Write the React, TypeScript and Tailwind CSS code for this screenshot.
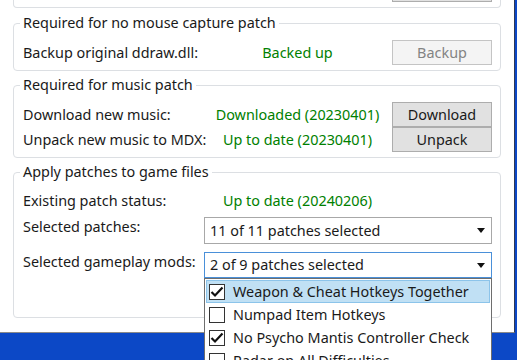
import { ReactNode } from 'react';

const font = { fontFamily: '"Noto Sans", "Open Sans", Arial, sans-serif' };

function Arrow() {
    return (
        <svg width="8" height="5" viewBox="0 0 8 5" className="shrink-0">
            <path d="M0 0 H8 L4 5 Z" fill="#111" />
        </svg>
    );
}

function Check({ on }: { on: boolean }) {
    return (
        <div className="w-[16px] h-[16px] border border-[#333] bg-white flex items-center justify-center shrink-0">
            {on && (
                <svg width="14" height="14" viewBox="0 0 14 14">
                    <path d="M1.5 7 L5 10.5 L12.5 2.5" fill="none" stroke="#111" strokeWidth="2.2" />
                </svg>
            )}
        </div>
    );
}

function Group({ title, children }: { title: string; children: ReactNode }) {
    return (
        <fieldset className="mx-[13px] rounded-[4px] border border-[#dcdfe3]">
            <legend className="ml-[6px] px-[3px] leading-[20px]">{title}</legend>
            {children}
        </fieldset>
    );
}

const btn = 'w-[100px] h-[25px] flex items-center justify-center border shrink-0';
const label = 'w-[181px] shrink-0 whitespace-nowrap';
const value = 'w-[187px] shrink-0 whitespace-nowrap text-center text-[#008000]';

export default function App() {
    const items = [
        { label: 'Weapon & Cheat Hotkeys Together', on: true, active: true },
        { label: 'Numpad Item Hotkeys', on: false },
        { label: 'No Psycho Mantis Controller Check', on: true },
        { label: 'Radar on All Difficulties', on: false },
    ];

    return (
        <div className="relative w-[517px] h-[360px] overflow-hidden bg-[#0c48c6] text-[14.4px] text-[#1a1a1a]" style={font}>
            <div className="w-[515px] h-[333px] bg-white border-r border-b border-r-[#2d3756] border-b-[#8a8a8a] flex flex-col">
                {/* tail of the group above */}
                <div className="mx-[13px] h-[8px] border-x border-b border-[#dcdfe3] rounded-b-[4px] flex justify-end pr-[8px]">
                    <div className="w-[100px] h-[2px] border-x border-b border-[#adadad] bg-[#e1e1e1]" />
                </div>

                <div className="mt-[5px] flex flex-col gap-[4px]">
                    <Group title="Required for no mouse capture patch">
                        <div className="pt-[7px] pb-[5px] pl-[9px] pr-[8px] flex items-center h-[37px]">
                            <span className={label}>Backup original ddraw.dll:</span>
                            <span className={value}>Backed up</span>
                            <div className={`${btn} ml-auto bg-[#f4f4f4] border-[#c4c4c4] text-[#838383]`}>Backup</div>
                        </div>
                    </Group>

                    <Group title="Required for music patch">
                        <div className="pt-[7px] pb-[5px] pl-[9px] pr-[8px] flex flex-col">
                            <div className="flex items-center h-[25px]">
                                <span className={label}>Download new music:</span>
                                <span className={value}>Downloaded (20230401)</span>
                                <div className={`${btn} ml-auto bg-[#e1e1e1] border-[#adadad]`}>Download</div>
                            </div>
                            <div className="flex items-center h-[25px]">
                                <span className={label}>Unpack new music to MDX:</span>
                                <span className={value}>Up to date (20230401)</span>
                                <div className={`${btn} ml-auto bg-[#e1e1e1] border-[#adadad]`}>Unpack</div>
                            </div>
                        </div>
                    </Group>

                    <Group title="Apply patches to game files">
                        <div className="pl-[9px] pr-[8px] pb-[39px] flex flex-col">
                            <div className="mt-[9px] h-[20px] flex items-center">
                                <span className={label}>Existing patch status:</span>
                                <span className={value}>Up to date (20240206)</span>
                            </div>
                            <div className="mt-[6px] flex">
                                <span className={`${label} leading-[20px]`}>Selected patches:</span>
                                <div className="w-[288px] h-[27px] border border-[#a8a8a8] flex items-center justify-between pl-[5px] pr-[6px]">
                                    <span>11 of 11 patches selected</span>
                                    <Arrow />
                                </div>
                            </div>
                            <div className="mt-[8px] flex">
                                <span className={`${label} leading-[20px]`}>Selected gameplay mods:</span>
                                <div className="relative w-[288px] h-[26px] border border-[#4a90d9] flex items-center justify-between pl-[5px] pr-[6px]">
                                    <span>2 of 9 patches selected</span>
                                    <Arrow />
                                    {/* open dropdown list */}
                                    <div className="absolute left-[-1px] top-[25px] w-[288px] bg-white border border-[#6e6e6e] pt-[1px] px-[1px] z-10">
                                        {items.map((it) => (
                                            <div
                                                key={it.label}
                                                className={`h-[23px] flex items-center gap-[8px] pl-[2px] border ${
                                                    it.active ? 'bg-[#c0e0f4] border-[#8cc4ea]' : 'border-transparent'
                                                }`}
                                            >
                                                <Check on={it.on} />
                                                <span className="whitespace-nowrap">{it.label}</span>
                                            </div>
                                        ))}
                                    </div>
                                </div>
                            </div>
                        </div>
                    </Group>
                </div>
            </div>
        </div>
    );
}
